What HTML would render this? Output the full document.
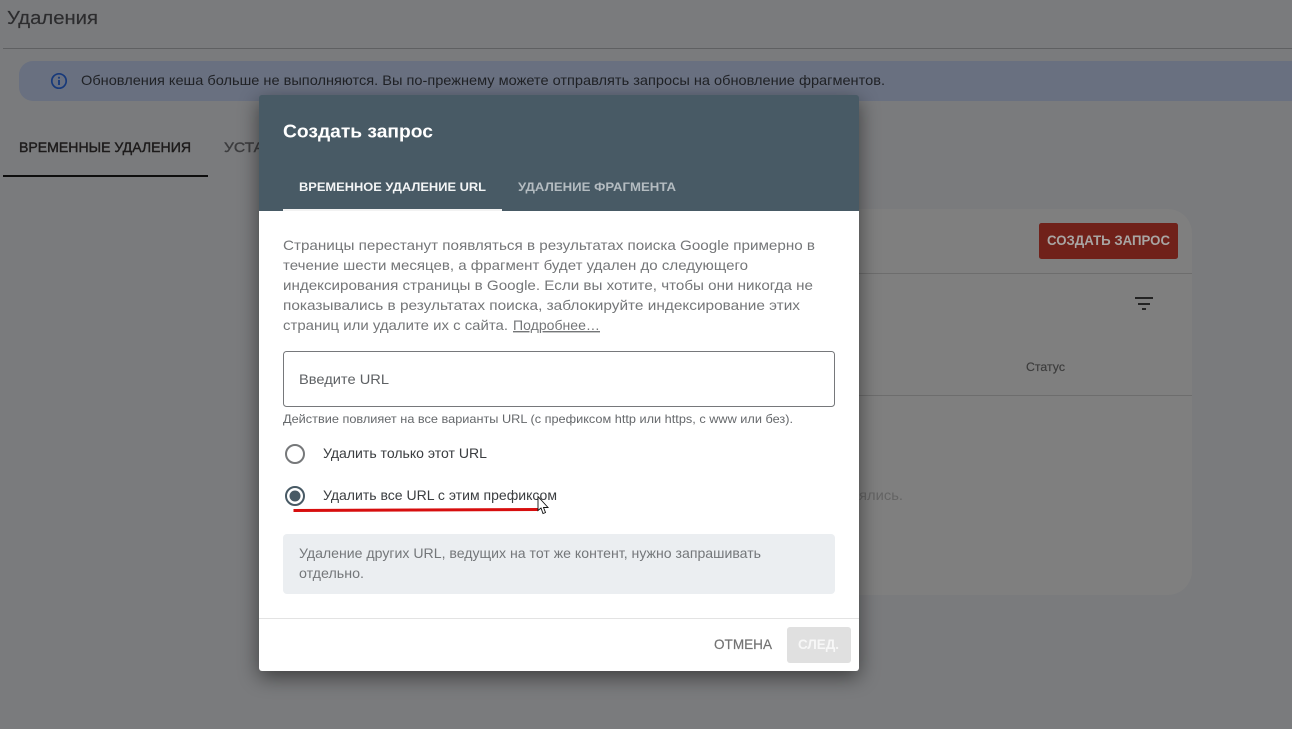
<!DOCTYPE html>
<html lang="ru"><head><meta charset="utf-8"><title>Создать запрос</title>
<style>
html,body{margin:0;padding:0;width:1292px;height:729px;overflow:hidden;background:#7a7b7d}
svg{display:block;position:absolute;left:0;top:0}
text{font-family:"Liberation Sans",sans-serif;white-space:pre}
.b{font-weight:700}
</style></head><body>
<svg width="1292" height="729" viewBox="0 0 1292 729" xmlns="http://www.w3.org/2000/svg">
<defs>
<filter id="sh" x="-15%" y="-15%" width="130%" height="130%"><feGaussianBlur stdDeviation="10"/></filter>
</defs>
<rect width="1292" height="729" fill="#7a7b7d"/>
<text x="7" y="24" font-size="18" fill="#2c2c2e" stroke="#2c2c2e" stroke-width=".15" textLength="91" lengthAdjust="spacingAndGlyphs">Удаления</text>
<rect x="3" y="48" width="1289" height="1" fill="#5f6062"/>
<path d="M1292 61H33a14 14 0 0 0-14 14v12a14 14 0 0 0 14 14H1292z" fill="#697080"/>
<circle cx="59" cy="81" r="7.2" fill="none" stroke="#17397a" stroke-width="1.7"/>
<rect x="58.1" y="80" width="1.8" height="5" fill="#17397a"/><rect x="58.1" y="76.8" width="1.8" height="1.8" fill="#17397a"/>
<text x="81" y="85" font-size="14" fill="#202226" textLength="804" lengthAdjust="spacingAndGlyphs">Обновления кеша больше не выполняются. Вы по-прежнему можете отправлять запросы на обновление фрагментов.</text>
<text x="19" y="152" font-size="14" fill="#1d1b1b" stroke="#1d1b1b" stroke-width=".4" textLength="172" lengthAdjust="spacingAndGlyphs">ВРЕМЕННЫЕ УДАЛЕНИЯ</text>
<text x="224" y="152" font-size="14" fill="#3d3d3f" stroke="#3d3d3f" stroke-width=".4" textLength="40" lengthAdjust="spacingAndGlyphs">УСТА</text>
<rect x="3" y="175" width="205" height="2" fill="#0d0d0d"/>

<rect x="500" y="209" width="692" height="386" rx="24" fill="#7f7f7f"/>
<rect x="500" y="273" width="692" height="1" fill="#6d6d6d"/>
<rect x="500" y="395" width="692" height="1" fill="#6d6d6d"/>
<rect x="1039" y="223" width="139" height="36" rx="2.5" fill="#70211a"/>
<text x="1047" y="245" font-size="14" class="b" fill="#a8a5a3" textLength="123" lengthAdjust="spacingAndGlyphs">СОЗДАТЬ ЗАПРОС</text>
<path d="M1135 297h18v2h-18zM1138 303h12v2h-12zM1142 308h4v2h-4z" fill="#232323"/>
<text x="1026" y="371" font-size="12" fill="#3c3c3c" stroke="#3c3c3c" stroke-width=".15" textLength="39" lengthAdjust="spacingAndGlyphs">Статус</text>
<text x="859" y="500" font-size="14" fill="#646464" textLength="44" lengthAdjust="spacingAndGlyphs">ялись.</text>

<rect x="259" y="101" width="600" height="576" fill="#000" opacity=".5" filter="url(#sh)"/>
<path d="M259 211V98a3 3 0 0 1 3-3H856a3 3 0 0 1 3 3V211z" fill="#485a65"/>
<path d="M259 211H859V668a3 3 0 0 1-3 3H262a3 3 0 0 1-3-3z" fill="#fff"/>
<text x="283" y="137.5" font-size="18" class="b" fill="#fff" textLength="150" lengthAdjust="spacingAndGlyphs">Создать запрос</text>
<text x="299" y="191" font-size="12" class="b" fill="#f3f5f6" textLength="187" lengthAdjust="spacingAndGlyphs">ВРЕМЕННОЕ УДАЛЕНИЕ URL</text>
<text x="518" y="191" font-size="12" class="b" fill="#b4bcc1" textLength="158" lengthAdjust="spacingAndGlyphs">УДАЛЕНИЕ ФРАГМЕНТА</text>
<rect x="283" y="209" width="219" height="2" fill="#f2f2f2"/>

<g font-size="14" fill="#747678">
<text x="283" y="250" textLength="532" lengthAdjust="spacingAndGlyphs">Страницы перестанут появляться в результатах поиска Google примерно в</text>
<text x="283" y="270" textLength="465" lengthAdjust="spacingAndGlyphs">течение шести месяцев, а фрагмент будет удален до следующего</text>
<text x="283" y="290" textLength="530" lengthAdjust="spacingAndGlyphs">индексирования страницы в Google. Если вы хотите, чтобы они никогда не</text>
<text x="283" y="310" textLength="517" lengthAdjust="spacingAndGlyphs">показывались в результатах поиска, заблокируйте индексирование этих</text>
<text x="283" y="330" textLength="225" lengthAdjust="spacingAndGlyphs">страниц или удалите их с сайта.</text>
<text x="513" y="330" textLength="87" lengthAdjust="spacingAndGlyphs" text-decoration="underline">Подробнее…</text>
</g>
<rect x="283.5" y="351.5" width="551" height="55" rx="3" fill="#fff" stroke="#76787b"/>
<text x="299" y="384" font-size="14" fill="#5e6164" textLength="90" lengthAdjust="spacingAndGlyphs">Введите URL</text>
<text x="283" y="423" font-size="12" fill="#65686b" textLength="510" lengthAdjust="spacingAndGlyphs">Действие повлияет на все варианты URL (с префиксом http или https, с www или без).</text>

<circle cx="295" cy="454" r="9" fill="none" stroke="#76787a" stroke-width="2"/>
<text x="323" y="458" font-size="14" fill="#3a3d40" textLength="164" lengthAdjust="spacingAndGlyphs">Удалить только этот URL</text>
<circle cx="295" cy="496" r="9" fill="none" stroke="#485a65" stroke-width="2"/>
<circle cx="295" cy="496" r="5.5" fill="#485a65"/>
<text x="323" y="500" font-size="14" fill="#3a3d40" textLength="234" lengthAdjust="spacingAndGlyphs">Удалить все URL с этим префиксом</text>
<path d="M293.5 510.5L538 509.5" stroke="#d70e0e" stroke-width="3" fill="none"/>
<path d="M538 496.5V510.5L541 508L543 513.5L545.5 512.5L543.5 507.5L548 507.5Z" fill="#fff" stroke="#111" stroke-width=".9"/>

<rect x="283" y="534" width="552" height="60" rx="4" fill="#ebeef1"/>
<text x="299" y="558" font-size="14" fill="#74777a" textLength="462" lengthAdjust="spacingAndGlyphs">Удаление других URL, ведущих на тот же контент, нужно запрашивать</text>
<text x="299" y="578" font-size="14" fill="#74777a" textLength="65" lengthAdjust="spacingAndGlyphs">отдельно.</text>

<rect x="259" y="618" width="600" height="1" fill="#e3e3e3"/>
<text x="714" y="649" font-size="14" fill="#737373" stroke="#737373" stroke-width=".2" textLength="58" lengthAdjust="spacingAndGlyphs">ОТМЕНА</text>
<rect x="787" y="627" width="64" height="36" rx="3" fill="#e0e0e0"/>
<text x="798" y="649" font-size="14" class="b" fill="#f7f7f7" textLength="41" lengthAdjust="spacingAndGlyphs">СЛЕД.</text>
</svg>
</body></html>
